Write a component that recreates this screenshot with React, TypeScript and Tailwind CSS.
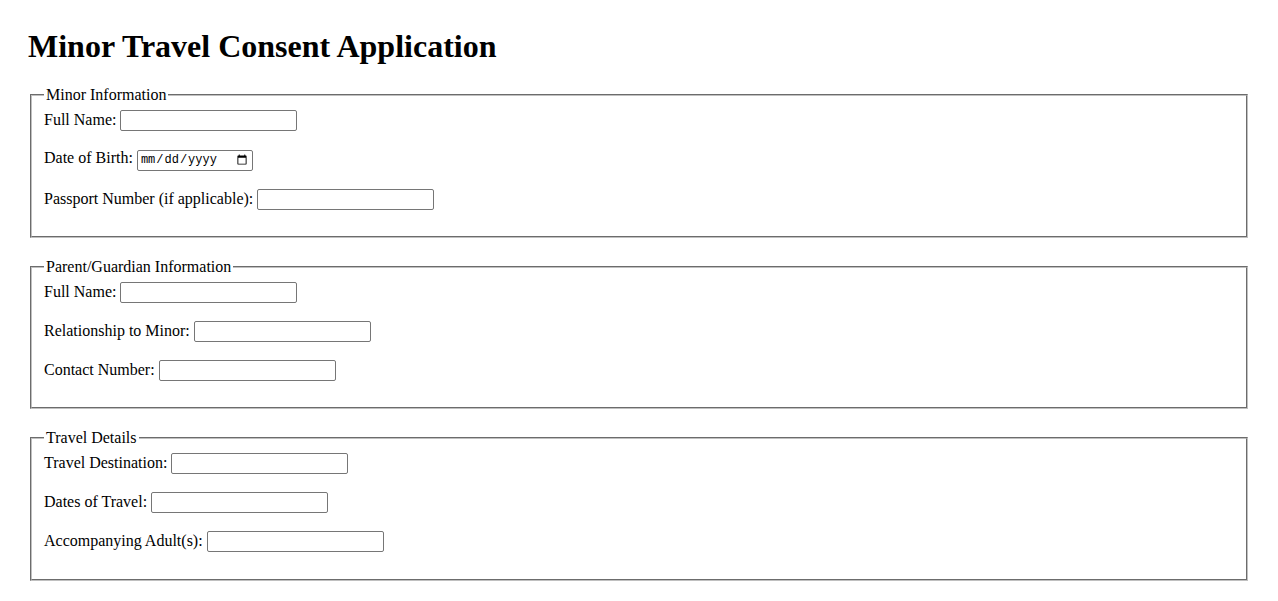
import React from 'react'

type Field = { id: string; label: string; type?: string }

const sections: { legend: string; fields: Field[] }[] = [
  {
    legend: 'Minor Information',
    fields: [
      { id: 'minorName', label: 'Full Name:' },
      { id: 'minorDob', label: 'Date of Birth:', type: 'date' },
      { id: 'passport', label: 'Passport Number (if applicable):' },
    ],
  },
  {
    legend: 'Parent/Guardian Information',
    fields: [
      { id: 'guardianName', label: 'Full Name:' },
      { id: 'relationship', label: 'Relationship to Minor:' },
      { id: 'contact', label: 'Contact Number:' },
    ],
  },
  {
    legend: 'Travel Details',
    fields: [
      { id: 'destination', label: 'Travel Destination:' },
      { id: 'dates', label: 'Dates of Travel:' },
      { id: 'adults', label: 'Accompanying Adult(s):' },
    ],
  },
]

function Input({ field }: { field: Field }) {
  if (field.type === 'date') {
    return (
      <input
        id={field.id}
        type="date"
        className="h-[21px] w-[116px] rounded-[2px] border border-[#767676] bg-white px-[2px] align-baseline font-['Liberation_Mono',monospace] text-[12px] leading-[normal] text-black"
      />
    )
  }
  return (
    <input
      id={field.id}
      type="text"
      className="h-[21px] w-[177px] rounded-[2px] border border-[#767676] bg-white px-[2px] align-baseline font-['Liberation_Sans',Arial,sans-serif] text-[13.33px] leading-[normal] text-black"
    />
  )
}

export default function App() {
  return (
    <div className="min-h-screen bg-white px-[28px] pt-[28px] font-['Liberation_Serif','Times_New_Roman',serif] text-[16px] leading-[normal] text-black">
      <h1 className="mb-[21.44px] text-[32px] font-bold leading-[normal]">Minor Travel Consent Application</h1>

      <form>
        {sections.map((s) => (
          <fieldset
            key={s.legend}
            className="mx-[2px] mb-5 border-2 border-[#c0c0c0] px-[12px] pt-[5.6px] pb-[8.6px] [border-style:groove]"
          >
            <legend className="px-[2px]">{s.legend}</legend>
            {s.fields.map((f) => (
              <React.Fragment key={f.id}>
                <label htmlFor={f.id}>{f.label}</label> <Input field={f} />
                <br />
                <br />
              </React.Fragment>
            ))}
          </fieldset>
        ))}
      </form>
    </div>
  )
}
